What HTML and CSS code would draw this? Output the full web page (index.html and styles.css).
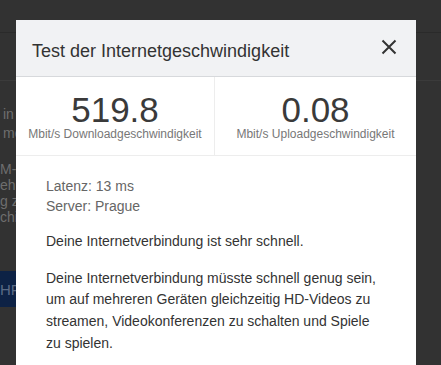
FILE: index.html
```html
<!DOCTYPE html>
<html lang="de">
<head>
    <meta charset="UTF-8">
    <meta name="viewport" content="width=device-width, initial-scale=1.0">
    <title>Internetgeschwindigkeit</title>
    <link rel="stylesheet" href="styles.css">
</head>
<body>
  <div class="page">
    <div class="topbar"></div>
    <div class="nav"></div>
    <div class="content">
      <p class="intro">in<br>me</p>
      <p class="text">M-<br>ehn<br>g z<br>chi</p>
      <button class="page-button" type="button">HF</button>
    </div>
  </div>

  <div class="modal">
    <div class="modal-header">
      <h2 class="modal-title">Test der Internetgeschwindigkeit</h2>
      <button class="close-button" type="button" aria-label="Schließen">
        <svg width="16" height="16" viewBox="0 0 16 16">
          <path d="M1.5 1.5 L14.5 14.5 M14.5 1.5 L1.5 14.5" stroke="#333" stroke-width="2" fill="none"/>
        </svg>
      </button>
    </div>
    <div class="stats">
      <div class="stat">
        <div class="stat-value">519.8</div>
        <div class="stat-label">Mbit/s Downloadgeschwindigkeit</div>
      </div>
      <div class="stat">
        <div class="stat-value">0.08</div>
        <div class="stat-label">Mbit/s Uploadgeschwindigkeit</div>
      </div>
    </div>
    <div class="modal-body">
      <div class="details">
        Latenz: 13 ms<br>
        Server: Prague
      </div>
      <p>Deine Internetverbindung ist sehr schnell.</p>
      <p>Deine Internetverbindung müsste schnell genug sein, um auf mehreren Geräten gleichzeitig HD-Videos zu streamen, Videokonferenzen zu schalten und Spiele zu spielen.</p>
    </div>
  </div>
</body>
</html>
```

FILE: styles.css
```css
* {
  box-sizing: border-box;
}
body {
  margin: 0;
  height: 365px;
  overflow: hidden;
  background-color: #323232;
  font-family: "Liberation Sans", Arial, sans-serif;
}
/* page behind the dialog, already dimmed */
.page {
  color: #6e6e6e;
  font-size: 14px;
}
.topbar {
  height: 33px;
  border-bottom: 1px solid #2a2a2a;
}
.nav {
  height: 48px;
  border-bottom: 1px solid #3b3b3b;
}
.intro {
  margin: 24px 0 0;
  padding-left: 3px;
  line-height: 19px;
}
.text {
  margin: 18px 0 0;
  line-height: 16px;
}
.page-button {
  display: block;
  margin: 46px 0 0;
  width: 40px;
  height: 36px;
  border: none;
  background-color: #0d2245;
  color: #5b6b85;
  font-family: inherit;
  font-size: 15px;
  text-align: left;
  padding: 0;
  box-shadow: 0 20px 0 -19px #3e3e3e;
}

.modal {
  position: absolute;
  top: 20px;
  left: 16px;
  width: 400px;
  height: 400px;
  background-color: #fff;
  color: #333;
}
.modal-header {
  display: flex;
  justify-content: space-between;
  align-items: center;
  height: 57px;
  padding: 5px 19px 0 16px;
  background-color: #f1f2f4;
  border-bottom: 1px solid #d7d9dc;
}
.modal-title {
  margin: 0;
  font-size: 18px;
  font-weight: normal;
  line-height: 20px;
  color: #333;
}
.close-button {
  display: flex;
  margin-top: -8px;
  padding: 0;
  border: none;
  background: none;
  cursor: pointer;
}
.stats {
  display: grid;
  grid-template-columns: 199px 1fr;
  border-bottom: 1px solid #ededed;
}
.stat {
  padding: 15px 0 14px;
  text-align: center;
}
.stat:first-child {
  border-right: 1px solid #ededed;
}
.stat-value {
  font-size: 35px;
  line-height: 1;
  color: #3a3a3a;
}
.stat-label {
  font-size: 12px;
  line-height: 14px;
  color: #777;
}
.modal-body {
  padding: 20px 30px;
  font-size: 14px;
}
.details {
  line-height: 20px;
  color: #666;
}
.modal-body p {
  margin: 15px 0 0;
  line-height: 21.7px;
}
```
